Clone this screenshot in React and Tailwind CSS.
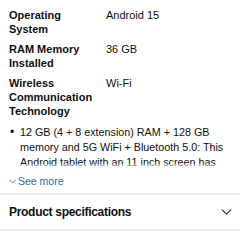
import React from "react";

const specs = [
  { label: ["Operating", "System"], value: "Android 15" },
  { label: ["RAM Memory", "Installed"], value: "36 GB" },
  { label: ["Wireless", "Communication", "Technology"], value: "Wi-Fi" },
];

const bulletLines = [
  "12 GB (4 + 8 extension) RAM + 128 GB",
  "memory and 5G WiFi + Bluetooth 5.0: This",
  "Android tablet with an 11 inch screen has",
  "32 GB RAM expansion of 4 GB base",
];

function Chevron({ className }) {
  return (
    <svg viewBox="0 0 12 7" className={className} fill="none" stroke="currentColor" strokeWidth="1.4" strokeLinecap="round" strokeLinejoin="round">
      <path d="M1 1l5 5 5-5" />
    </svg>
  );
}

export default function App() {
  return (
    <div className="w-[240px] h-[240px] overflow-hidden bg-white text-[#0f1111]" style={{ fontFamily: '"Liberation Sans", Arial, sans-serif' }}>
      <div className="pt-[8px] pl-[9px] flex flex-col gap-[6px]">
        {specs.map((s) => (
          <div key={s.value} className="flex text-[11px] leading-[14px]">
            <div className="w-[97px] font-bold">
              {s.label.map((l) => (
                <div key={l}>{l}</div>
              ))}
            </div>
            <div>{s.value}</div>
          </div>
        ))}
      </div>

      <div className="relative mt-[7px] h-[49px] overflow-hidden pl-[10px]">
        <div className="flex text-[10.75px] leading-[15px]">
          <span className="w-[10px] shrink-0 text-[12px]">•</span>
          <div className="whitespace-nowrap">
            {bulletLines.map((l) => (
              <div key={l}>{l}</div>
            ))}
          </div>
        </div>
        <div className="absolute left-0 right-0 bottom-0 h-[10px] bg-gradient-to-b from-white/40 to-white" />
      </div>

      <div className="pl-[9px] flex items-center gap-[2px] text-[10.5px] leading-[14px] text-[#2b6e8e]">
        <Chevron className="w-[7px] h-[5px]" />
        <span>See more</span>
      </div>

      <div className="mt-[5px] h-[2px] bg-[#eff0f0]" />
      <div className="flex items-center justify-between pl-[9px] pr-[8px] h-[34px]">
        <span className="text-[12px] font-bold tracking-[-0.3px]">Product specifications</span>
        <Chevron className="w-[11px] h-[6px] text-[#333]" />
      </div>
      <div className="h-[2px] bg-[#eff0f0]" />
      <div className="flex items-center justify-between pl-[9px] pr-[8px] pt-[6px]">
        <span className="text-[12px] font-bold tracking-[-0.3px]">Product documents</span>
        <Chevron className="w-[11px] h-[6px] text-[#333]" />
      </div>
    </div>
  );
}
